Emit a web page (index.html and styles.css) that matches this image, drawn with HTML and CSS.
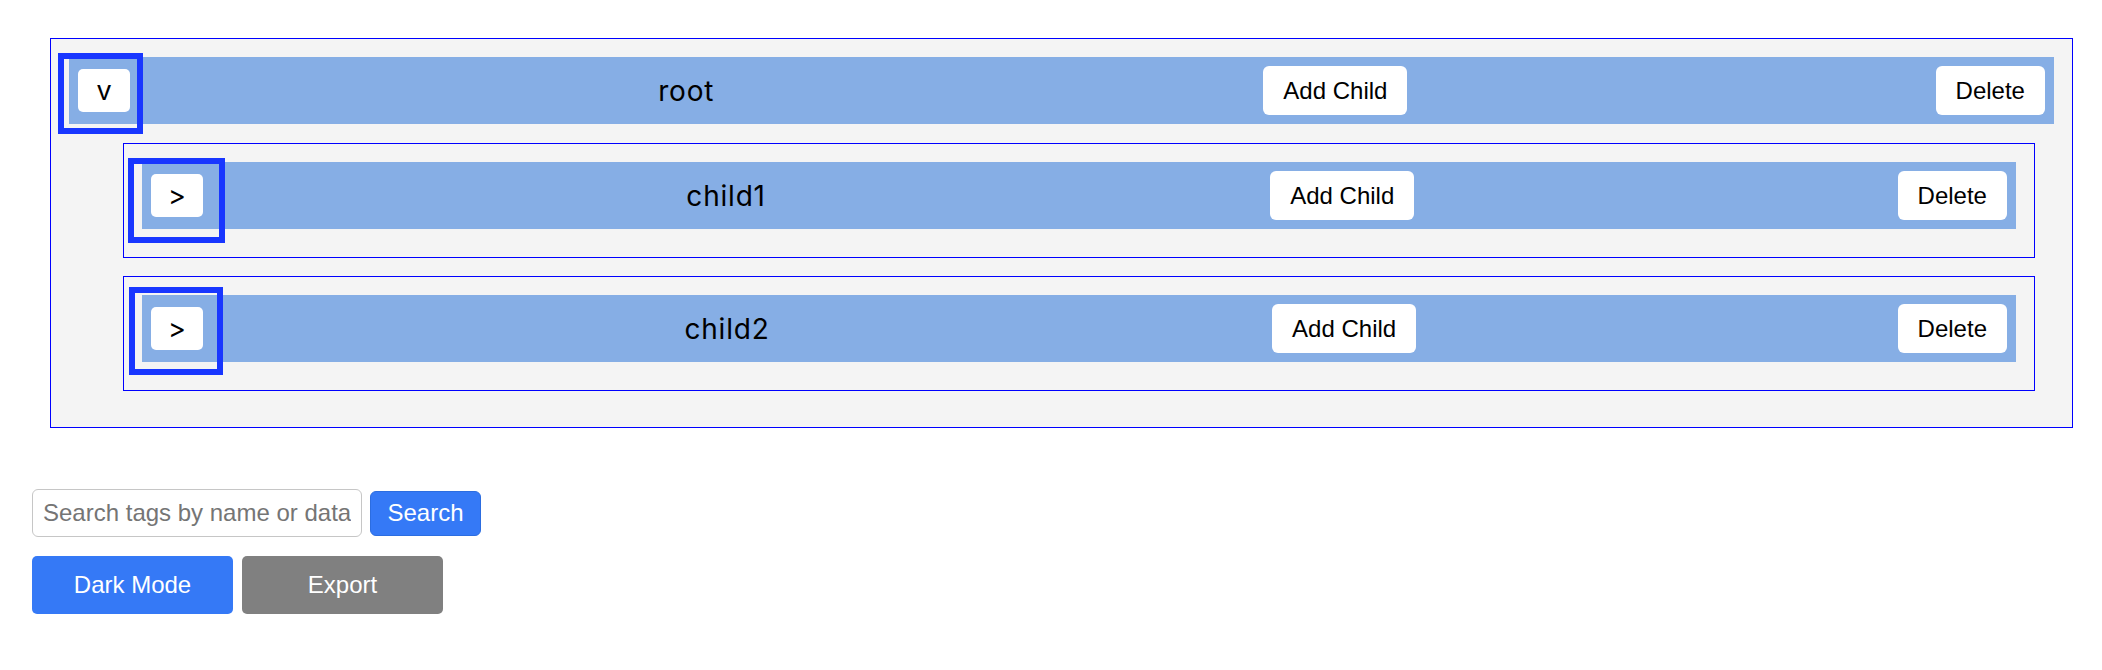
FILE: index.html
```html
<!DOCTYPE html>
<html lang="en">
<head>
<meta charset="utf-8">
<title>Tag Tree</title>
<link rel="stylesheet" href="styles.css">
</head>
<body>
<div class="page">
  <div class="tree">
    <div class="node">
      <div class="bar">
        <button class="toggle">v</button>
        <span class="name">root</span>
        <button class="btn">Add Child</button>
        <button class="btn">Delete</button>
        <span class="mark mark-root"></span>
      </div>
      <div class="children">
        <div class="node">
          <div class="bar">
            <button class="toggle">&gt;</button>
            <span class="name">child1</span>
            <button class="btn">Add Child</button>
            <button class="btn">Delete</button>
            <span class="mark mark-c1"></span>
          </div>
        </div>
        <div class="node">
          <div class="bar">
            <button class="toggle">&gt;</button>
            <span class="name">child2</span>
            <button class="btn">Add Child</button>
            <button class="btn">Delete</button>
            <span class="mark mark-c2"></span>
          </div>
        </div>
      </div>
    </div>
  </div>
  <div class="controls">
    <div class="search-row">
      <input class="search" type="text" placeholder="Search tags by name or data">
      <button class="search-btn">Search</button>
    </div>
    <div class="action-row">
      <button class="action dark">Dark Mode</button>
      <button class="action export">Export</button>
    </div>
  </div>
</div>
</body>
</html>
```

FILE: styles.css
```css
body {
  margin: 0;
  background: #ffffff;
  font-family: "Liberation Sans", Arial, sans-serif;
  color: #000000;
}

.tree {
  padding: 38px 29px 0 50px;
}

.node {
  border: 1px solid #0000ff;
  background: #f4f4f4;
  padding: 18px;
}

.bar {
  position: relative;
  box-sizing: border-box;
  height: 67px;
  margin-bottom: 10px;
  padding: 0 9px;
  background: #86aee5;
  display: flex;
  align-items: center;
  justify-content: space-between;
}

.children {
  display: flex;
  flex-direction: column;
  gap: 18px;
  padding: 9px 0 18px;
  margin: 0 19px 0 54px;
}

.toggle {
  width: 52px;
  height: 43px;
  padding: 0;
  border: none;
  border-radius: 5px;
  background: #ffffff;
  color: #000000;
  font-family: Inter, "Liberation Sans", sans-serif;
  font-size: 27px;
  font-weight: 400;
  line-height: 1;
}

.name {
  padding-right: 21px;
  font-family: Inter, "Liberation Sans", sans-serif;
  font-size: 28px;
  font-weight: 400;
  letter-spacing: 0.8px;
  color: #000000;
}

.btn {
  height: 49px;
  padding: 0 20px;
  border: none;
  border-radius: 6px;
  background: #ffffff;
  color: #000000;
  font-family: "Liberation Sans", Arial, sans-serif;
  font-size: 24px;
}

.mark {
  position: absolute;
  box-sizing: border-box;
  border: 6px solid #1836ff;
  pointer-events: none;
}

.mark-root {
  left: -11px;
  top: -4px;
  width: 85px;
  height: 81px;
}

.mark-c1 {
  left: -14px;
  top: -4px;
  width: 97px;
  height: 85px;
}

.mark-c2 {
  left: -13px;
  top: -8px;
  width: 94px;
  height: 88px;
}

.controls {
  padding: 61px 0 0 32px;
}

.search-row {
  display: flex;
  align-items: center;
  gap: 8px;
}

.search {
  box-sizing: border-box;
  width: 330px;
  height: 48px;
  padding: 0 10px;
  border: 1px solid #c6c6c6;
  border-radius: 6px;
  font-family: "Liberation Sans", Arial, sans-serif;
  font-size: 24px;
  color: #000000;
  background: #ffffff;
}

.search::placeholder {
  color: #757575;
}

.search-btn {
  box-sizing: border-box;
  width: 111px;
  height: 45px;
  padding: 0;
  border: 1px solid #2c6de0;
  border-radius: 6px;
  background: #3579f6;
  color: #ffffff;
  font-family: "Liberation Sans", Arial, sans-serif;
  font-size: 24px;
}

.action-row {
  display: flex;
  gap: 9px;
  margin-top: 19px;
}

.action {
  width: 201px;
  height: 58px;
  padding: 0;
  border: none;
  border-radius: 5px;
  color: #ffffff;
  font-family: "Liberation Sans", Arial, sans-serif;
  font-size: 24px;
}

.dark {
  background: #3579f6;
}

.export {
  background: #808080;
}
```
